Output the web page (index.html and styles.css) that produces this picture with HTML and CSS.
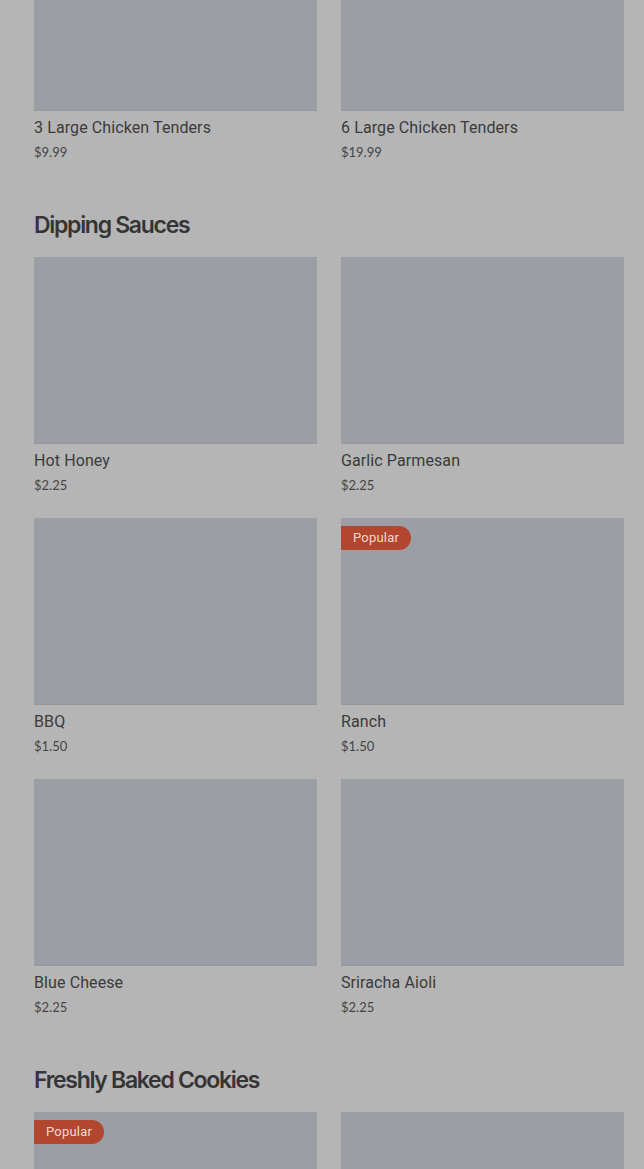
FILE: index.html
```html
<!DOCTYPE html>
<html lang="en">
<head>
  <meta charset="UTF-8">
  <meta name="viewport" content="width=device-width, initial-scale=1.0">
  <title>Menu</title>
  <link rel="stylesheet" href="styles.css">
</head>
<body>
  <div class="menu">
    <section class="menu-section first">
      <div class="item-grid">
        <div class="item">
          <div class="item-image"></div>
          <p class="item-name">3 Large Chicken Tenders</p>
          <p class="item-price">$9.99</p>
        </div>
        <div class="item">
          <div class="item-image"></div>
          <p class="item-name">6 Large Chicken Tenders</p>
          <p class="item-price">$19.99</p>
        </div>
      </div>
    </section>

    <section class="menu-section">
      <h2 class="section-title">Dipping Sauces</h2>
      <div class="item-grid">
        <div class="item">
          <div class="item-image"></div>
          <p class="item-name">Hot Honey</p>
          <p class="item-price">$2.25</p>
        </div>
        <div class="item">
          <div class="item-image"></div>
          <p class="item-name">Garlic Parmesan</p>
          <p class="item-price">$2.25</p>
        </div>
        <div class="item">
          <div class="item-image"></div>
          <p class="item-name">BBQ</p>
          <p class="item-price">$1.50</p>
        </div>
        <div class="item">
          <div class="item-image"><span class="badge">Popular</span></div>
          <p class="item-name">Ranch</p>
          <p class="item-price">$1.50</p>
        </div>
        <div class="item">
          <div class="item-image"></div>
          <p class="item-name">Blue Cheese</p>
          <p class="item-price">$2.25</p>
        </div>
        <div class="item">
          <div class="item-image"></div>
          <p class="item-name">Sriracha Aioli</p>
          <p class="item-price">$2.25</p>
        </div>
      </div>
    </section>

    <section class="menu-section">
      <h2 class="section-title">Freshly Baked Cookies</h2>
      <div class="item-grid">
        <div class="item">
          <div class="item-image"><span class="badge">Popular</span></div>
        </div>
        <div class="item">
          <div class="item-image"></div>
        </div>
      </div>
    </section>
  </div>
</body>
</html>
```

FILE: styles.css
```css
body {
  margin: 0;
  font-family: Roboto, "Liberation Sans", sans-serif;
  background-color: #b5b5b5;
  color: #3a3a3a;
  overflow: hidden;
}
.menu {
  padding: 0 20px 0 34px;
  margin-top: -76px;
}
.menu-section {
  padding-top: 49px;
}
.menu-section.first {
  padding-top: 0;
}
.section-title {
  margin: 0 0 17px;
  font-family: Inter, "Liberation Sans", sans-serif;
  font-size: 23px;
  line-height: 30px;
  font-weight: 600;
  letter-spacing: -1.3px;
  color: #353535;
}
.item-grid {
  display: grid;
  grid-template-columns: 1fr 1fr;
  column-gap: 24px;
  row-gap: 24px;
}
.item-image {
  position: relative;
  height: 187px;
  background-color: #9b9ea5;
  border-bottom: 1px solid #95979c;
  box-sizing: border-box;
}
.badge {
  position: absolute;
  top: 8px;
  left: 0;
  height: 24px;
  line-height: 24px;
  padding: 0 12px 0 12px;
  border-radius: 0 12px 12px 0;
  background-color: #b3462f;
  color: #f1d9d1;
  font-size: 13px;
  letter-spacing: 0.2px;
}
.item-name {
  margin: 7px 0 0;
  font-size: 16px;
  line-height: 20px;
  letter-spacing: 0.1px;
  color: #3b3b3b;
}
.item-price {
  margin: 5px 0 0;
  font-family: Lato, "Liberation Sans", sans-serif;
  font-size: 13px;
  line-height: 18px;
  color: #454545;
}
```
